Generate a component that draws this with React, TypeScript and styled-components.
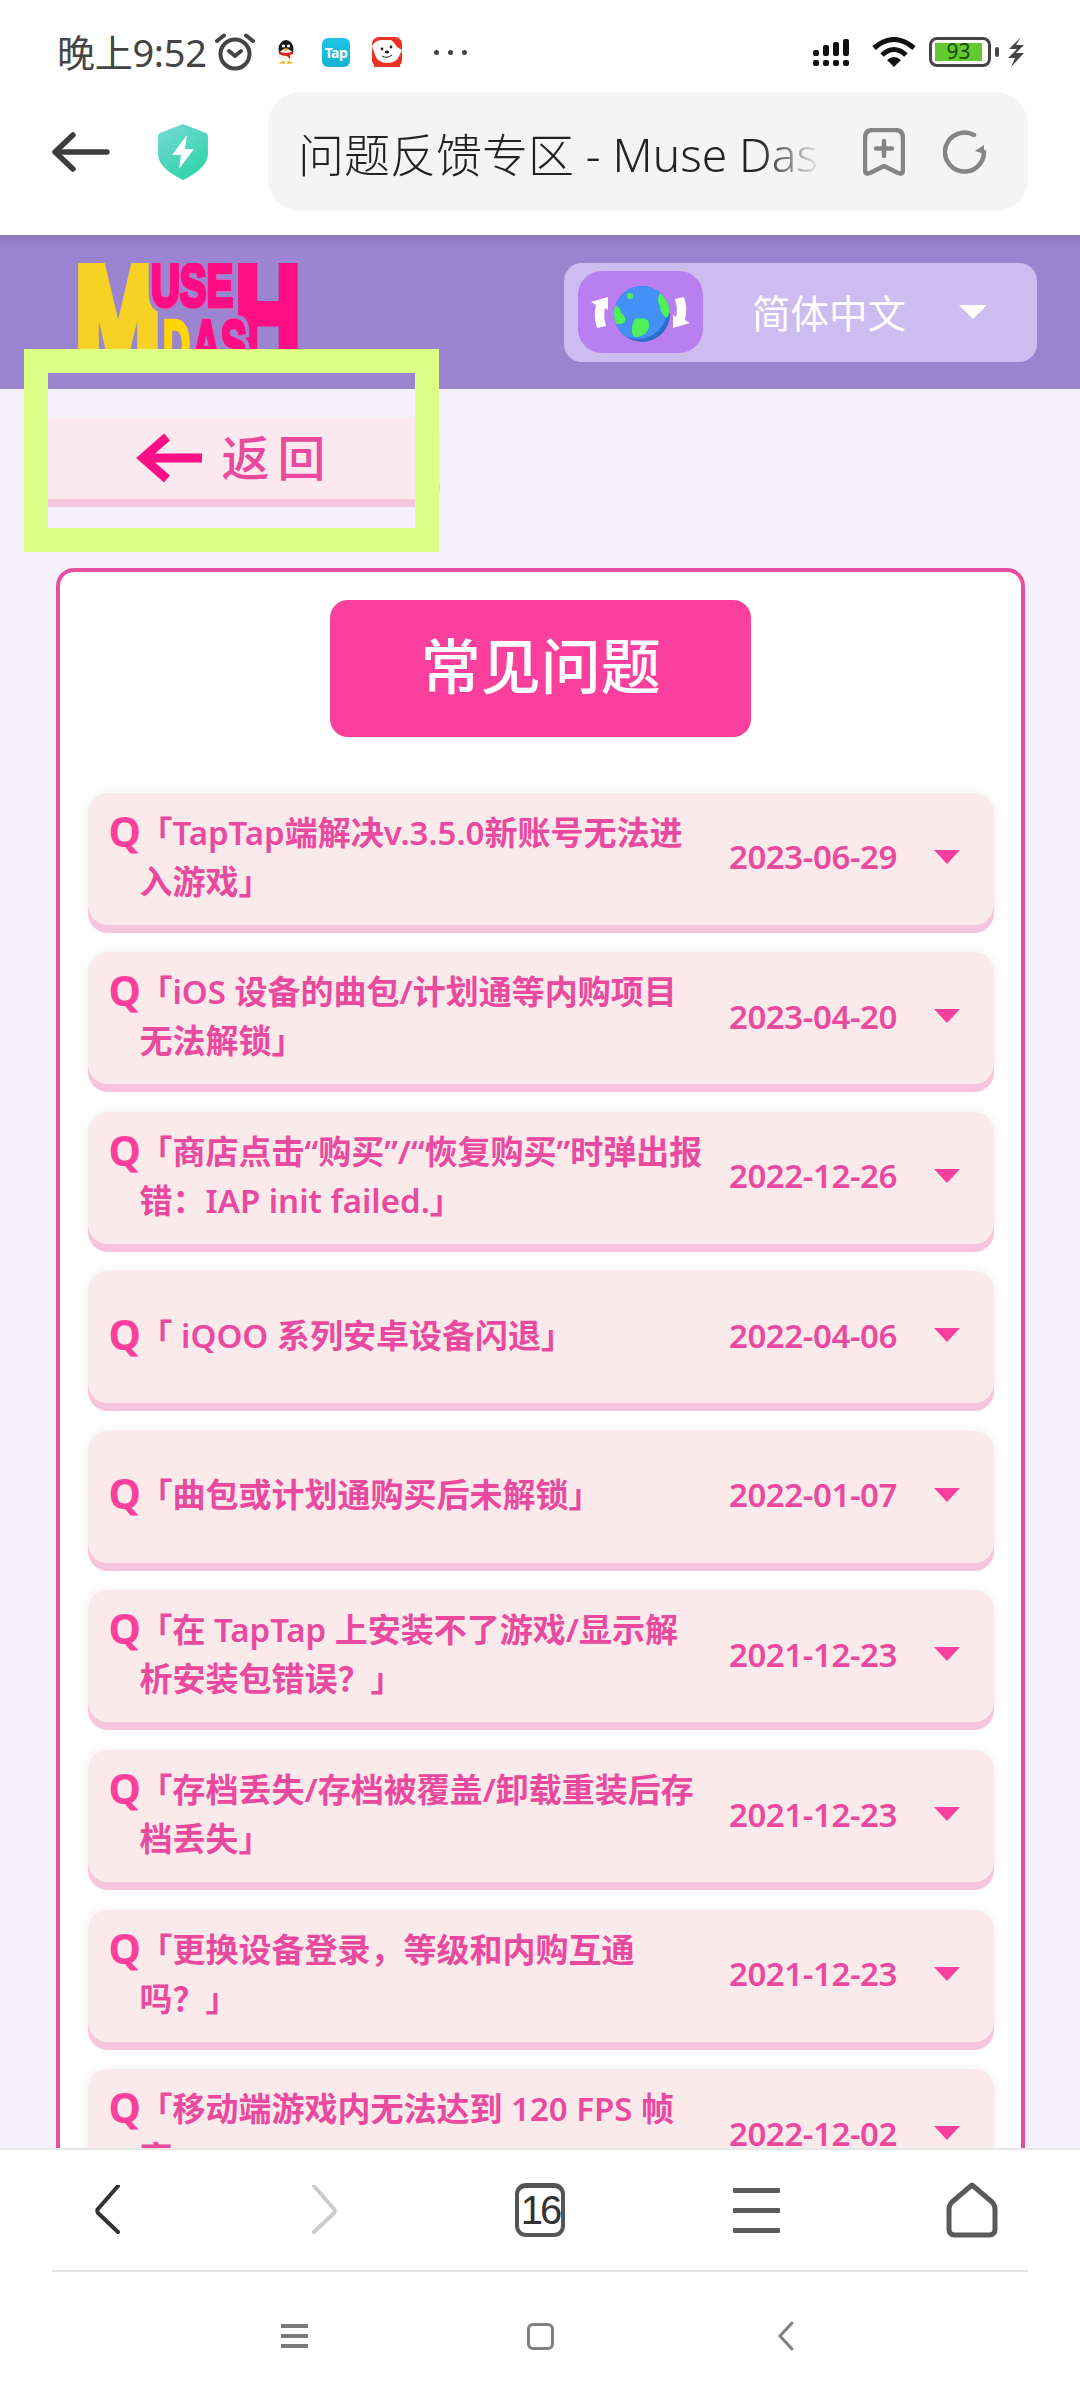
import React from 'react';
import styled, { createGlobalStyle } from 'styled-components';

const CJK = `"Noto Sans", "Noto Sans CJK SC", sans-serif`;

const faqs = [
  { title: ['「TapTap端解决v.3.5.0新账号无法进', '入游戏」'], date: '2023-06-29' },
  { title: ['「iOS 设备的曲包/计划通等内购项目', '无法解锁」'], date: '2023-04-20' },
  { title: ['「商店点击“购买”/“恢复购买”时弹出报', '错：IAP init failed.」'], date: '2022-12-26' },
  { title: ['「 iQOO 系列安卓设备闪退」'], date: '2022-04-06' },
  { title: ['「曲包或计划通购买后未解锁」'], date: '2022-01-07' },
  { title: ['「在 TapTap 上安装不了游戏/显示解', '析安装包错误？」'], date: '2021-12-23' },
  { title: ['「存档丢失/存档被覆盖/卸载重装后存', '档丢失」'], date: '2021-12-23' },
  { title: ['「更换设备登录，等级和内购互通', '吗？」'], date: '2021-12-23' },
  { title: ['「移动端游戏内无法达到 120 FPS 帧', '率」'], date: '2022-12-02' },
];

export default function App() {
  return (
    <Screen>
      <GlobalStyle />
      <TopBar>
        <StatusBar>
          <Clock>晚上9:52</Clock>
          <AlarmIcon />
          <QQIcon />
          <TapBadge>Tap</TapBadge>
          <DogIcon />
          <Dots>
            <i />
            <i />
            <i />
          </Dots>
          <StatusRight>
            <SignalIcon />
            <WifiIcon />
            <Battery>
              <BatteryFill>93</BatteryFill>
            </Battery>
            <BatteryNub />
            <BoltIcon />
          </StatusRight>
        </StatusBar>
        <UrlRow>
          <BackArrowIcon />
          <ShieldIcon />
          <UrlPill>
            <UrlText>问题反馈专区 - Muse Dash</UrlText>
            <BookmarkIcon />
            <ReloadIcon />
          </UrlPill>
        </UrlRow>
      </TopBar>

      <Main>
        <Header>
          <LogoMark />
          <LangSelect>
            <GlobeBox>
              <GlobeIcon />
            </GlobeBox>
            <LangName>简体中文</LangName>
            <LangCaret />
          </LangSelect>
        </Header>

        <BackWrap>
          <BackButton>
            <PinkArrowIcon />
            <span>返回</span>
          </BackButton>
          <Highlight />
        </BackWrap>

        <Card>
          <CardTitle>常见问题</CardTitle>
          {faqs.map((f) => (
            <Row key={f.title[0]}>
              <Question>
                <QMark>Q</QMark>
                <QText>
                  {f.title.map((line) => (
                    <div key={line}>{line}</div>
                  ))}
                </QText>
              </Question>
              <DateText>{f.date}</DateText>
              <RowCaret />
            </Row>
          ))}
        </Card>
      </Main>

      <BottomBar>
        <NavRow>
          <svg width="30" height="50" viewBox="0 0 30 50" fill="none" stroke="#333" strokeWidth="4" strokeLinecap="round" strokeLinejoin="round">
            <path d="M25 2 L5 25 Q3.5 26 5 29 L25 48" transform="translate(0 -1)" />
          </svg>
          <svg width="30" height="50" viewBox="0 0 30 50" fill="none" stroke="#ccc" strokeWidth="4" strokeLinecap="round" strokeLinejoin="round">
            <path d="M5 2 L25 25 Q26.5 26 25 29 L5 48" transform="translate(0 -1)" />
          </svg>
          <TabCount>16</TabCount>
          <MenuBars>
            <i />
            <i />
            <i />
          </MenuBars>
          <svg width="52" height="56" viewBox="0 0 52 56" fill="none" stroke="#5a5a5a" strokeWidth="5" strokeLinejoin="round">
            <path d="M26 3 L46 20 Q49 23 49 27 L49 47 Q49 53 43 53 L9 53 Q3 53 3 47 L3 27 Q3 23 6 20 Z" />
          </svg>
        </NavRow>
        <Separator />
        <SysRow>
          <SysMenu>
            <i />
            <i />
            <i />
          </SysMenu>
          <SysHome />
          <svg width="18" height="30" viewBox="0 0 18 30" fill="none" stroke="#808080" strokeWidth="3" strokeLinecap="round" strokeLinejoin="round">
            <path d="M15 2 L3 15 L15 28" />
          </svg>
        </SysRow>
      </BottomBar>
    </Screen>
  );
}

function AlarmIcon() {
  return (
    <AlarmSvg width="40" height="38" viewBox="0 0 40 38" fill="none" stroke="#444" strokeWidth="4" strokeLinecap="round">
      <circle cx="20" cy="21" r="14.5" />
      <path d="M14 18 L20 23 L26 18" strokeLinejoin="round" />
      <path d="M2 8 L9 2.5 M38 8 L31 2.5" />
    </AlarmSvg>
  );
}

function QQIcon() {
  return (
    <QQSvg width="22" height="26" viewBox="0 0 22 26">
      <ellipse cx="11" cy="10" rx="7.5" ry="9" fill="#1a1a1a" />
      <ellipse cx="11" cy="17" rx="7.5" ry="7" fill="#f5f0e8" />
      <path d="M3.5 12 Q11 16 18.5 12 L18 15 L15 16 L15 20 L12 17 Q7 17 4 15 Z" fill="#d42a1e" />
      <circle cx="8.5" cy="7" r="1.6" fill="#fff" />
      <circle cx="13.5" cy="7" r="1.6" fill="#fff" />
      <path d="M8 10 Q11 8.5 14 10 L11 12 Z" fill="#f3b41b" />
      <path d="M3 24 L10 25 L9 22 Z M19 24 L12 25 L13 22 Z" fill="#f3b41b" />
    </QQSvg>
  );
}

function DogIcon() {
  return (
    <DogSvg width="30" height="30" viewBox="0 0 30 30">
      <rect width="30" height="30" rx="7" fill="#ea3323" />
      <path d="M0 9 Q4 2 11 3 L19 3 Q23 6 25 10 L30 13 L27 19 Q25 26 15 26 Q6 26 3 18 Z" fill="#fff" />
      <circle cx="10" cy="12" r="1.4" fill="#222" />
      <circle cx="19" cy="10" r="1.4" fill="#222" />
      <ellipse cx="15" cy="15" rx="2.2" ry="1.6" fill="#222" />
      <path d="M10 19 Q15 22 20 18" fill="none" stroke="#222" strokeWidth="1" />
      <path d="M2 30 L2 24 L9 26 L21 26 L28 24 L28 30 Z" fill="#ea3323" />
    </DogSvg>
  );
}

function SignalIcon() {
  return (
    <svg width="36" height="27" viewBox="0 0 36 27" fill="#111">
      <rect x="0" y="11" width="6" height="6" rx="2" />
      <rect x="0" y="21" width="6" height="6" rx="2" />
      <rect x="10" y="6" width="6" height="11" rx="2" />
      <rect x="10" y="21" width="6" height="6" rx="2" />
      <rect x="20" y="3" width="6" height="14" rx="2" />
      <rect x="20" y="21" width="6" height="6" rx="2" />
      <rect x="30" y="0" width="6" height="17" rx="2" />
      <rect x="30" y="21" width="6" height="6" rx="2" />
    </svg>
  );
}

function WifiIcon() {
  return (
    <WifiSvg width="44" height="30" viewBox="0 0 44 30" fill="none" stroke="#111" strokeWidth="5">
      <path d="M2 11 Q22 -6 42 11" />
      <path d="M10 18 Q22 7 34 18" />
      <path d="M22 30 L15 23 Q22 17 29 23 Z" fill="#111" stroke="none" />
    </WifiSvg>
  );
}

function BoltIcon() {
  return (
    <BoltSvg width="18" height="30" viewBox="0 0 18 30" fill="#444">
      <path d="M14 0 L2 12 L10 12 L1 21 L8 21 L4 30 L17 16 L9 16 L17 8 L9 8 Z" />
    </BoltSvg>
  );
}

function BackArrowIcon() {
  return (
    <svg width="58" height="40" viewBox="0 0 58 40" fill="none" stroke="#3c3c3c" strokeWidth="5.5" strokeLinecap="round" strokeLinejoin="round">
      <path d="M55 20 L4 20 M21 3 L3 20 L21 37" />
    </svg>
  );
}

function ShieldIcon() {
  return (
    <ShieldSvg width="50" height="56" viewBox="0 0 50 56">
      <defs>
        <linearGradient id="shieldFill" x1="0.2" y1="0" x2="0.8" y2="1">
          <stop offset="0" stopColor="#72d9d3" />
          <stop offset="1" stopColor="#2cd3a6" />
        </linearGradient>
      </defs>
      <path d="M25 0 L48 9 Q50 10 50 12 L50 30 Q50 44 25 56 Q0 44 0 30 L0 12 Q0 10 2 9 Z" fill="url(#shieldFill)" />
      <path d="M29 11 L14 31 L23 31 L21 45 L36 25 L27 25 Z" fill="#fff" />
    </ShieldSvg>
  );
}

function BookmarkIcon() {
  return (
    <BookmarkSvg width="42" height="48" viewBox="0 0 42 48" fill="none" stroke="#858585" strokeWidth="4.5" strokeLinecap="round" strokeLinejoin="round">
      <path d="M10 2 L32 2 Q40 2 40 10 L40 42 Q40 47 35 45 L21 38 L7 45 Q2 47 2 42 L2 10 Q2 2 10 2 Z" />
      <path d="M21 13 L21 28 M13 20.5 L29 20.5" />
    </BookmarkSvg>
  );
}

function ReloadIcon() {
  return (
    <ReloadSvg width="44" height="44" viewBox="0 0 44 44" fill="none" stroke="#858585" strokeWidth="4.5" strokeLinecap="round">
      <path d="M41 22 A19.5 19.5 0 1 1 31 5" />
      <path d="M41 24 L32 21 L41 15 Z" fill="#858585" stroke="none" />
    </ReloadSvg>
  );
}

function LogoMark() {
  return (
    <LogoSvg width="220" height="104" viewBox="0 0 220 104">
      <defs>
        <filter id="logoOutline" x="-10%" y="-10%" width="120%" height="120%">
          <feMorphology in="SourceAlpha" operator="dilate" radius="2.5" result="grown" />
          <feFlood floodColor="#9b84d0" />
          <feComposite in2="grown" operator="in" result="edge" />
          <feMerge>
            <feMergeNode in="edge" />
            <feMergeNode in="SourceGraphic" />
          </feMerge>
        </filter>
      </defs>
      <g fontFamily='"Liberation Sans", sans-serif' fontWeight="700">
        <text x="-3" y="100" fontSize="140" textLength="86" lengthAdjust="spacingAndGlyphs" fill="#f6d225" stroke="#f6d225" strokeWidth="10">
          M
        </text>
        <text x="157" y="100" fontSize="140" textLength="66" lengthAdjust="spacingAndGlyphs" fill="#ff0f86" stroke="#ff0f86" strokeWidth="9">
          H
        </text>
        <text x="85" y="104" fontSize="66" textLength="27" lengthAdjust="spacingAndGlyphs" fill="#ffd500" stroke="#ffd500" strokeWidth="4.5">
          D
        </text>
        <g filter="url(#logoOutline)">
          <text x="73" y="43" fontSize="60" textLength="82" lengthAdjust="spacingAndGlyphs" fill="#ff0f86" stroke="#ff0f86" strokeWidth="5">
            USE
          </text>
          <text x="114" y="104" fontSize="66" textLength="55" lengthAdjust="spacingAndGlyphs" fill="#ff0f86" stroke="#ff0f86" strokeWidth="4.5">
            AS
          </text>
        </g>
      </g>
    </LogoSvg>
  );
}

function GlobeIcon() {
  return (
    <svg width="105" height="65" viewBox="0 0 105 65">
      <defs>
        <clipPath id="globeClip">
          <circle cx="54" cy="34" r="28" />
        </clipPath>
      </defs>
      <path d="M3 22 L20 17 L20 30 L17 28 Q15 36 18 46 L9 48 Q5 36 8 25 Z" fill="#fff" />
      <path d="M102 43 L85 48 L85 35 L88 37 Q90 29 87 19 L96 17 Q100 29 97 40 Z" fill="#fff" />
      <circle cx="54" cy="34" r="28" fill="#2a6ec7" />
      <g clipPath="url(#globeClip)">
        <circle cx="50" cy="30" r="29" fill="#4391f6" />
        <circle cx="42" cy="16" r="3" fill="#4ff05a" />
        <path d="M27 25 Q33 28 33 33 Q39 37 37 42 Q31 46 27 43 Q24 35 27 25 Z" fill="#4ff05a" />
        <path d="M72 13 Q80 18 83 30 L79 38 Q72 34 72 26 Q68 20 72 13 Z" fill="#4ff05a" />
        <path d="M47 39 Q54 37 60 40 Q63 47 58 53 Q50 59 45 56 Q42 47 47 39 Z" fill="#4ff05a" />
      </g>
    </svg>
  );
}

function PinkArrowIcon() {
  return (
    <svg width="68" height="50" viewBox="0 0 68 50" fill="none" stroke="#ff0f86" strokeWidth="9" strokeLinejoin="miter">
      <path d="M67 25 L8 25" />
      <path d="M32 4 L8 25 L32 46" />
    </svg>
  );
}

const GlobalStyle = createGlobalStyle`
  html, body {
    margin: 0;
    padding: 0;
    width: 1080px;
    height: 2400px;
    overflow: hidden;
    background: #fff;
  }
`;

const Screen = styled.div`
  width: 1080px;
  height: 2400px;
  display: flex;
  flex-direction: column;
  overflow: hidden;
  font-family: ${CJK};
`;

const TopBar = styled.div`
  height: 235px;
  flex: none;
  background: #fff;
`;

const StatusBar = styled.div`
  height: 92px;
  box-sizing: border-box;
  padding: 12px 55px 0 57px;
  display: flex;
  align-items: center;
`;

const Clock = styled.span`
  font-size: 38px;
  line-height: 40px;
  color: #444;
  width: 150px;
  white-space: nowrap;
  letter-spacing: -0.3px;
`;

const AlarmSvg = styled.svg`
  margin-left: 8px;
`;

const QQSvg = styled.svg`
  margin-left: 20px;
`;

const TapBadge = styled.span`
  margin-left: 25px;
  width: 28px;
  height: 29px;
  border-radius: 6px;
  background: linear-gradient(#1ec4e6, #12b4d2);
  color: #fff;
  font-size: 14px;
  font-weight: 700;
  line-height: 29px;
  text-align: center;
  letter-spacing: -0.5px;
`;

const DogSvg = styled.svg`
  margin-left: 22px;
`;

const Dots = styled.span`
  margin-left: 32px;
  display: flex;
  gap: 9px;

  i {
    width: 5px;
    height: 5px;
    border-radius: 50%;
    background: #444;
  }
`;

const StatusRight = styled.div`
  margin-left: auto;
  display: flex;
  align-items: center;
`;

const WifiSvg = styled.svg`
  margin-left: 23px;
`;

const Battery = styled.div`
  margin-left: 13px;
  width: 62px;
  height: 30px;
  box-sizing: border-box;
  border: 3.5px solid #444;
  border-radius: 8px;
  padding: 3px;
  display: flex;
`;

const BatteryFill = styled.div`
  width: 47px;
  background: #62c92e;
  color: #1d4a0a;
  font-size: 21px;
  line-height: 17px;
  text-align: center;
`;

const BatteryNub = styled.div`
  margin-left: 4px;
  width: 4px;
  height: 10px;
  border-radius: 2px;
  background: #444;
`;

const BoltSvg = styled.svg`
  margin-left: 8px;
`;

const UrlRow = styled.div`
  height: 143px;
  box-sizing: border-box;
  padding: 0 52px 24px;
  display: flex;
  align-items: center;
`;

const ShieldSvg = styled.svg`
  margin-left: 48px;
`;

const UrlPill = styled.div`
  margin-left: 60px;
  width: 761px;
  height: 119px;
  box-sizing: border-box;
  padding-left: 30px;
  border-radius: 32px;
  background: #f4f4f4;
  display: flex;
  align-items: center;
`;

const UrlText = styled.div`
  width: 524px;
  flex: none;
  overflow: hidden;
  white-space: nowrap;
  font-size: 46px;
  font-weight: 300;
  color: #222;
  mask-image: linear-gradient(90deg, #000 88%, transparent 100%);
`;

const BookmarkSvg = styled.svg`
  margin-left: 41px;
`;

const ReloadSvg = styled.svg`
  margin-left: 38px;
`;

const Main = styled.div`
  flex: 1;
  min-height: 0;
  overflow: hidden;
  background: #f4f1fd;
`;

const Header = styled.header`
  height: 154px;
  box-sizing: border-box;
  padding: 28px 43px 0 78px;
  background: linear-gradient(#9079c2 0, #9b84d0 14px);
  display: flex;
  justify-content: space-between;
  align-items: flex-start;
`;

const LogoSvg = styled.svg`
  display: block;
`;

const LangSelect = styled.div`
  width: 473px;
  height: 99px;
  box-sizing: border-box;
  padding: 8px 0 0 14px;
  border-radius: 18px;
  background: #cdbcf0;
  display: flex;
  align-items: flex-start;
`;

const GlobeBox = styled.div`
  width: 125px;
  height: 82px;
  border-radius: 24px;
  background: #b97ff0;
  display: flex;
  align-items: center;
  justify-content: center;
`;

const LangName = styled.span`
  margin: 9px 0 0 49px;
  font-size: 38.5px;
  line-height: 66px;
  color: #fff;
  white-space: nowrap;
`;

const LangCaret = styled.span`
  margin: 34px 0 0 53px;
  width: 0;
  height: 0;
  border-left: 14px solid transparent;
  border-right: 14px solid transparent;
  border-top: 14px solid #fff;
`;

const BackWrap = styled.div`
  position: relative;
  margin: 28px 0 0 24px;
  width: 416px;
`;

const BackButton = styled.div`
  height: 82px;
  box-sizing: border-box;
  padding-left: 5px;
  border-radius: 20px;
  background: #fbe9ef;
  box-shadow: 0 8px 0 #f7c5dd;
  display: flex;
  align-items: center;
  justify-content: center;
  gap: 18px;
  font-size: 48px;
  font-weight: 500;
  line-height: 76px;
  letter-spacing: 8px;
  color: #ea4a9e;
`;

const Highlight = styled.div`
  position: absolute;
  left: 0;
  top: -68px;
  width: 415px;
  height: 203px;
  box-sizing: border-box;
  border: 24px solid #dcff85;
`;

const Card = styled.section`
  margin: 69px 55px 0 56px;
  box-sizing: border-box;
  padding: 27.5px 27px 0 27.5px;
  border: 4.5px solid #e84ea0;
  border-bottom: 0;
  border-radius: 18px 18px 0 0;
  background: #fff;
`;

const CardTitle = styled.h1`
  width: 421px;
  height: 137px;
  margin: 0 auto 56px;
  border-radius: 18px;
  background: #fb3f9d;
  color: #fff;
  font-size: 60px;
  font-weight: 500;
  line-height: 133px;
  text-align: center;
`;

const Row = styled.div`
  height: 132px;
  box-sizing: border-box;
  margin-bottom: 27.6px;
  padding: 0 34px 4px 21px;
  border-radius: 20px;
  background: #faeaec;
  box-shadow: 0 8px 0 #f7c4de, 0 0 12px rgba(0, 0, 0, 0.07);
  display: flex;
  align-items: center;
`;

const Question = styled.div`
  flex: 1;
  min-width: 0;
  display: flex;
  align-items: flex-start;
`;

const QMark = styled.span`
  width: 31px;
  flex: none;
  font-size: 41px;
  font-weight: 700;
  line-height: 47px;
  color: #fb3f9d;
`;

const QText = styled.div`
  font-size: 33px;
  font-weight: 600;
  line-height: 49px;
  color: #ea4a9e;
  white-space: nowrap;
`;

const DateText = styled.span`
  width: 190px;
  flex: none;
  font-size: 33px;
  font-weight: 600;
  letter-spacing: -0.4px;
  text-align: center;
  color: #ea4a9e;
`;

const RowCaret = styled.span`
  margin-left: 26px;
  width: 0;
  height: 0;
  flex: none;
  border-left: 13.5px solid transparent;
  border-right: 13.5px solid transparent;
  border-top: 14px solid #f83f9e;
`;

const BottomBar = styled.div`
  height: 252px;
  flex: none;
  position: relative;
  background: #fff;
  border-top: 2px solid #e6e6e6;
  box-sizing: border-box;
`;

const NavRow = styled.nav`
  height: 120px;
  display: grid;
  grid-template-columns: repeat(5, 216px);
  justify-items: center;
  align-items: center;
`;

const TabCount = styled.span`
  width: 50px;
  height: 54px;
  box-sizing: border-box;
  border: 4.5px solid #555;
  border-top-width: 5.5px;
  border-radius: 11px;
  font-family: "Liberation Sans", sans-serif;
  font-size: 40px;
  line-height: 44px;
  letter-spacing: -3px;
  text-align: center;
  color: #333;
`;

const MenuBars = styled.span`
  width: 47px;
  display: flex;
  flex-direction: column;
  gap: 15px;

  i {
    height: 5px;
    background: #5a5a5a;
    border-radius: 1px;
  }
`;

const Separator = styled.div`
  height: 2px;
  margin: 0 52px;
  background: #e4e4e4;
`;

const SysRow = styled.div`
  height: 128px;
  padding: 0 171px;
  display: grid;
  grid-template-columns: repeat(3, 246px);
  justify-items: center;
  align-items: center;
`;

const SysMenu = styled.span`
  width: 27px;
  display: flex;
  flex-direction: column;
  gap: 6px;

  i {
    height: 4px;
    background: #7a7a7a;
  }
`;

const SysHome = styled.span`
  width: 27px;
  height: 27px;
  box-sizing: border-box;
  border: 3px solid #808080;
  border-radius: 6px;
`;
